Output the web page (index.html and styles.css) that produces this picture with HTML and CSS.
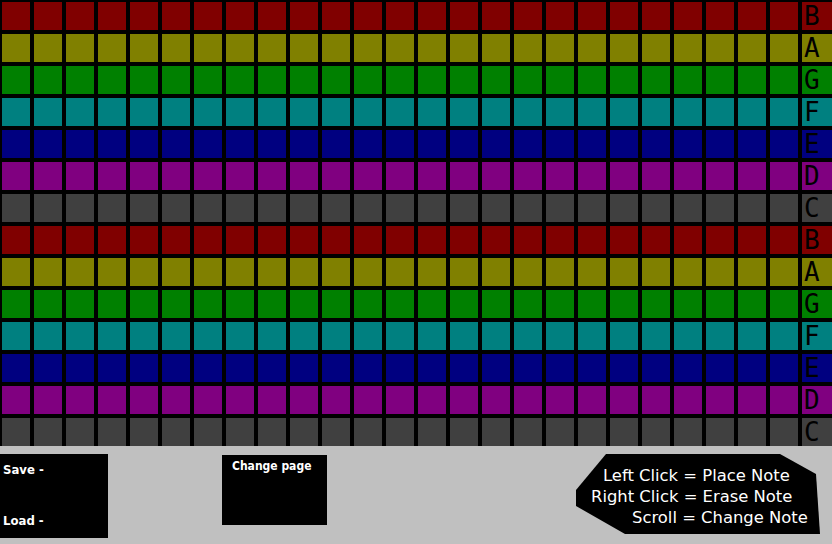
FILE: index.html
```html
<html>
<head>
  <meta charset="UTF-8">
  <title>Note Grid</title>
  <link rel="stylesheet" href="styles.css">
</head>
<body>

<div class="roll" id="roll"></div>

<div class="panel">
  <div class="box saveload">
    <p>Save -</p>
    <p>Load -</p>
  </div>
  <div class="box pager">
    <p>Change page</p>
  </div>
  <div class="help">
    <p class="l1">Left Click = Place Note</p>
    <p class="l2">Right Click = Erase Note</p>
    <p class="l3">Scroll = Change Note</p>
  </div>
</div>

<script>
var notes = ['B', 'A', 'G', 'F', 'E', 'D', 'C', 'B', 'A', 'G', 'F', 'E', 'D', 'C'];
var el = document.getElementById('roll');
var data = '';
for (var i = 0; i < notes.length; i++) {
  data += '<div class="row note-' + notes[i] + '">';
  for (var j = 0; j < 25; j++) {
    data += '<div class="cell"></div>';
  }
  data += '<div class="label">' + notes[i] + '</div>';
  data += '</div>';
}
el.innerHTML = data;
</script>

</body>
</html>
```

FILE: styles.css
```css
body{
  margin: 0;
  width: 832px;
  height: 544px;
  overflow: hidden;
  background: #c0c0c0;
}

.roll{
  display: flex;
  flex-direction: column;
}
.row{
  display: flex;
  height: 32px;
}
.row:last-child{
  height: 30px;
}
.cell{
  width: 32px;
  flex: none;
  box-sizing: border-box;
  border: 2px solid #000;
  background: var(--note);
}
.row:last-child .cell, .row:last-child .label{
  border-bottom: 0;
}
.label{
  flex: 1;
  box-sizing: border-box;
  border: 2px solid #000;
  border-right: 0;
  background: var(--note);
  font-family: "DejaVu Sans Mono", monospace;
  font-size: 26px;
  line-height: 28px;
  padding-left: 2px;
  color: #000;
}

.note-B{ --note: #800000; }
.note-A{ --note: #808000; }
.note-G{ --note: #008000; }
.note-F{ --note: #008080; }
.note-E{ --note: #000080; }
.note-D{ --note: #800080; }
.note-C{ --note: #404040; }

.panel{
  display: flex;
  align-items: flex-start;
  height: 98px;
}
.box{
  background: #000;
  color: #fff;
  font-family: "DejaVu Sans Condensed", "DejaVu Sans", sans-serif;
  font-weight: bold;
  font-size: 13px;
  white-space: nowrap;
}
.box p{
  margin: 0;
}
.saveload{
  width: 108px;
  height: 84px;
  margin-top: 8px;
  padding: 8px 3px 0;
  box-sizing: border-box;
}
.saveload p + p{
  margin-top: 36px;
}
.pager{
  width: 105px;
  height: 70px;
  margin-top: 9px;
  margin-left: 114px;
  padding: 4px 10px 0;
  box-sizing: border-box;
  font-size: 12px;
}
.help{
  width: 244px;
  height: 80px;
  margin-top: 8px;
  margin-left: auto;
  margin-right: 12px;
  background: #000;
  color: #fff;
  clip-path: polygon(30px 0, 204px 0, 240px 20px, 244px 80px, 49px 80px, 0 52px, 0 36px);
  font-family: "DejaVu Sans", sans-serif;
  font-size: 16.4px;
  line-height: 21px;
  padding-top: 11px;
  box-sizing: border-box;
}
.help p{
  margin: 0;
  white-space: nowrap;
}
.l1{ padding-left: 27px; }
.l2{ padding-left: 15px; }
.l3{ padding-left: 56px; }
```
